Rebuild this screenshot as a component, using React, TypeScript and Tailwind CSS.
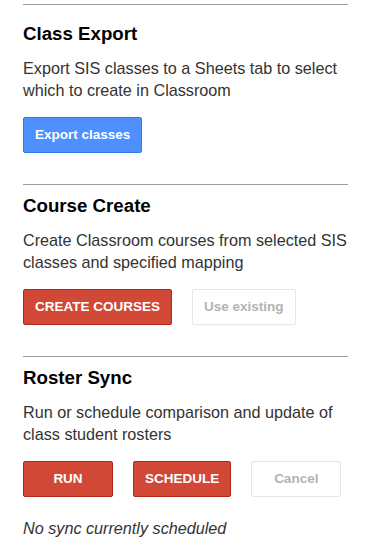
import React from "react";

type BtnKind = "blue" | "red" | "disabled";

const btnClass: Record<BtnKind, string> = {
  blue: "bg-[#4d90fe] border-[#3079ed] text-white",
  red: "bg-[#d14836] border-[#b0281a] text-white",
  disabled: "bg-white border-[#e6e6e6] text-[#b3b3b3]",
};

const Btn: React.FC<{ kind: BtnKind; label: string; minW?: string }> = ({ kind, label, minW }) => (
  <button
    className={`h-[36px] px-[11px] rounded-[2px] border text-[13.5px] font-bold leading-none ${btnClass[kind]} ${minW ?? ""}`}
  >
    {label}
  </button>
);

const Section: React.FC<{
  title: string;
  desc: string;
  first?: boolean;
  children: React.ReactNode;
}> = ({ title, desc, first, children }) => (
  <section className={first ? "" : "mt-[31px]"}>
    <div className="border-t border-[#9e9e9e]" />
    <h3 className={`${first ? "mt-[18px]" : "mt-[10px]"} text-[18.7px] leading-[22px] font-bold text-black`}>
      {title}
    </h3>
    <p className="mt-[12px] text-[16.2px] leading-[22px] text-[#333]">{desc}</p>
    <div className="mt-[16px] flex gap-[20px]">{children}</div>
  </section>
);

export default function App() {
  return (
    <div
      className="w-[373px] h-[558px] bg-white pt-[4px] pl-[23px] pr-[25px]"
      style={{ fontFamily: '"Liberation Sans", Arial, sans-serif' }}
    >
      <Section
        first
        title="Class Export"
        desc="Export SIS classes to a Sheets tab to select which to create in Classroom"
      >
        <Btn kind="blue" label="Export classes" />
      </Section>
      <Section
        title="Course Create"
        desc="Create Classroom courses from selected SIS classes and specified mapping"
      >
        <Btn kind="red" label="CREATE COURSES" />
        <Btn kind="disabled" label="Use existing" />
      </Section>
      <Section
        title="Roster Sync"
        desc="Run or schedule comparison and update of class student rosters"
      >
        <Btn kind="red" label="RUN" minW="min-w-[90px]" />
        <Btn kind="red" label="SCHEDULE" minW="min-w-[90px]" />
        <Btn kind="disabled" label="Cancel" minW="min-w-[90px]" />
      </Section>
      <p className="mt-[20px] text-[16.2px] leading-[22px] italic text-[#333]">
        No sync currently scheduled
      </p>
    </div>
  );
}
